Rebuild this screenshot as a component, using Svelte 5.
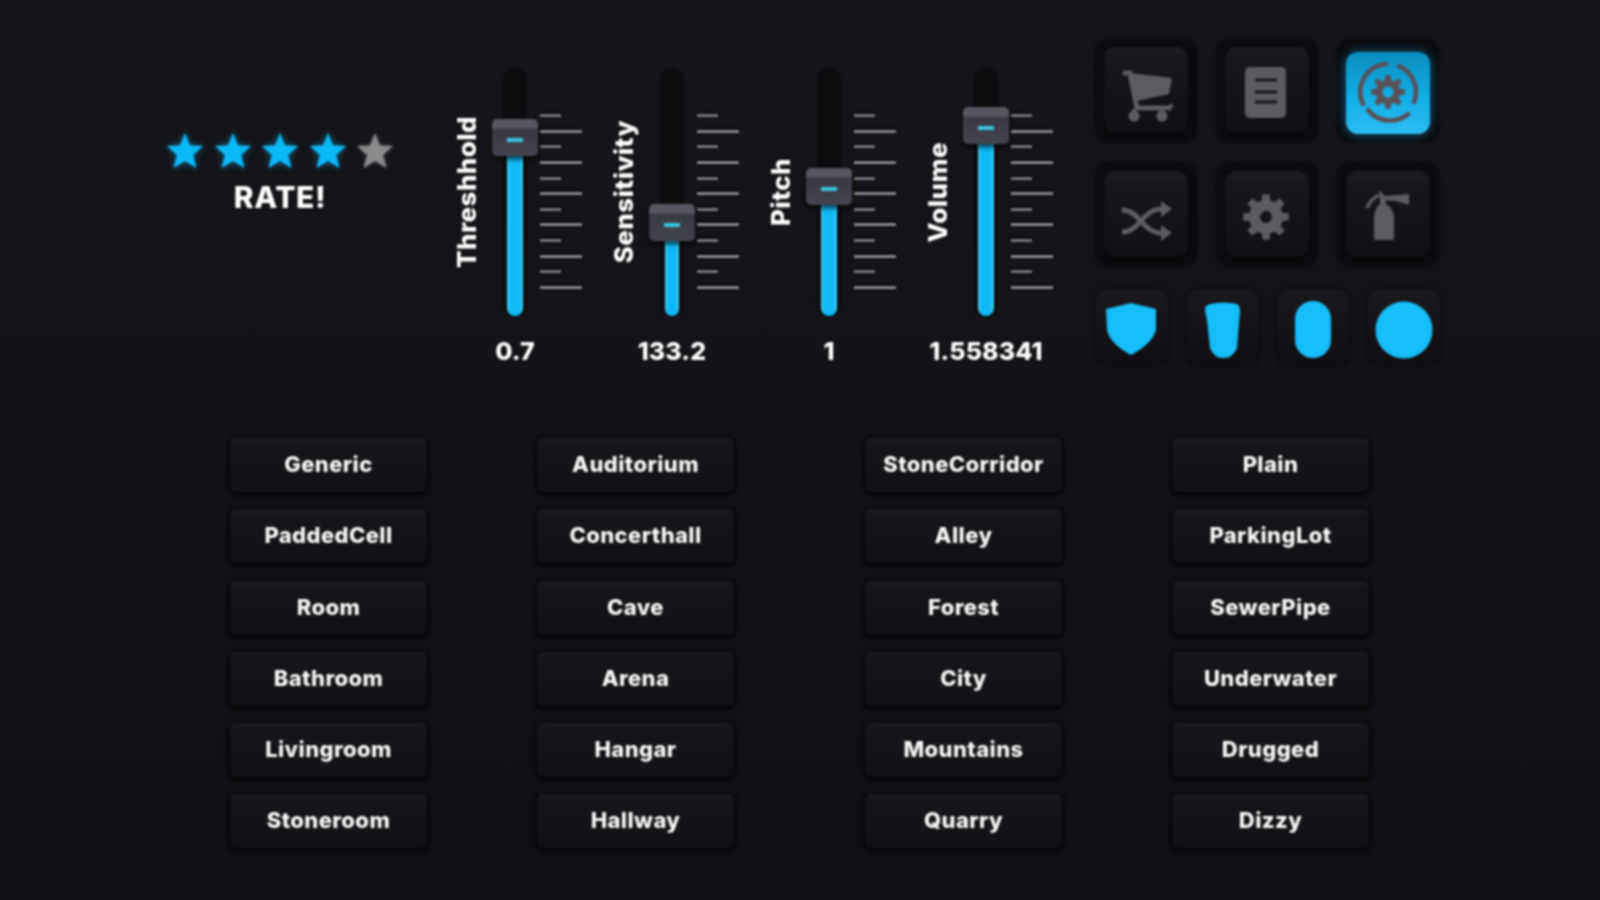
<script>
	const stars = [true, true, true, true, false];
	const sliders = [
		{ label: 'Threshhold', value: '0.7', top: 51, thick: 4 },
		{ label: 'Sensitivity', value: '133.2', top: 136, thick: 5 },
		{ label: 'Pitch', value: '1', top: 100, thick: 4 },
		{ label: 'Volume', value: '1.558341', top: 39, thick: 4 }
	];
	const ticks = Array.from({ length: 12 }, (_, i) => i % 2 === 1);
	const columns = [
		['Generic', 'PaddedCell', 'Room', 'Bathroom', 'Livingroom', 'Stoneroom'],
		['Auditorium', 'Concerthall', 'Cave', 'Arena', 'Hangar', 'Hallway'],
		['StoneCorridor', 'Alley', 'Forest', 'City', 'Mountains', 'Quarry'],
		['Plain', 'ParkingLot', 'SewerPipe', 'Underwater', 'Drugged', 'Dizzy']
	];

	function gearPath(cx, cy, outer, inner, hole) {
		let d = '';
		const teeth = 8;
		const step = (Math.PI * 2) / teeth;
		for (let i = 0; i < teeth; i++) {
			const a = i * step - Math.PI / 2;
			const pts = [
				[inner, a - step * 0.32],
				[outer, a - step * 0.2],
				[outer, a + step * 0.2],
				[inner, a + step * 0.32]
			];
			for (const [r, t] of pts) {
				d += `${d ? 'L' : 'M'}${(cx + r * Math.cos(t)).toFixed(2)} ${(cy + r * Math.sin(t)).toFixed(2)}`;
			}
		}
		d += `Z M${cx + hole} ${cy} A${hole} ${hole} 0 1 0 ${cx - hole} ${cy} A${hole} ${hole} 0 1 0 ${cx + hole} ${cy}Z`;
		return d;
	}
</script>

<div class="stage">
	<section class="top">
		<div class="rating">
			<div class="stars">
				{#each stars as on}
					<svg class="star" class:on viewBox="0 0 40 40" width="40" height="40">
						<polygon points="20,2 25,14.5 38,15 28,24 31.5,37 20,30 8.5,37 12,24 2,15 15,14.5" />
					</svg>
				{/each}
			</div>
			<div class="rate">RATE!</div>
		</div>

		<div class="sliders">
			{#each sliders as s}
				<div class="slider">
					<div class="label"><span>{s.label}</span></div>
					<div class="track">
						<div class="fill" style="top: {s.top + 20}px; left: {s.thick}px; right: {s.thick}px"></div>
						<div class="handle" style="top: {s.top}px"><i></i></div>
					</div>
					<div class="ticks">
						{#each ticks as long}
							<b class:long></b>
						{/each}
					</div>
					<div class="value">{s.value}</div>
				</div>
			{/each}
		</div>

		<div class="tools">
			<div class="icons">
				<div class="well">
					<div class="key">
						<svg viewBox="0 0 84 86">
							<path class="line" d="M19 26 H26 L33 61 H67" />
							<path d="M26 26 L68 31 L65 47 L33 54 Z" />
							<path class="line thin" d="M67 57 V61" />
							<path class="line thin" d="M30 62 V68 M58 62 V68" />
							<circle cx="30" cy="69" r="5.5" />
							<circle cx="58" cy="69" r="5.5" />
						</svg>
					</div>
				</div>
				<div class="well">
					<div class="key">
						<svg viewBox="0 0 84 86">
							<rect x="20" y="20" width="41" height="51" rx="5" />
							<path class="cut" d="M30 33 H52 M30 45 H52 M30 55 H52" />
						</svg>
					</div>
				</div>
				<div class="well">
					<div class="key active">
						<svg viewBox="0 0 84 82">
							<path class="ring" d="M40 12 A28 28 0 0 0 17 52" />
							<path class="ring" d="M53 14 A28 28 0 0 1 68 50" />
							<path class="ring" d="M22 58 A28 28 0 0 0 62 62" />
							<path fill-rule="evenodd" d={gearPath(42, 40, 17, 12.5, 5.5)} />
						</svg>
					</div>
				</div>
				<div class="well">
					<div class="key">
						<svg viewBox="0 0 84 86">
							<path class="line" d="M18 39 C36 39 38 62 58 62" />
							<path class="line" d="M18 61 C36 61 38 38 58 38" />
							<path d="M57 30 L68 38 L57 46 Z M57 54 L68 62 L57 70 Z" />
						</svg>
					</div>
				</div>
				<div class="well">
					<div class="key">
						<svg viewBox="0 0 84 86">
							<path fill-rule="evenodd" d={gearPath(41, 46, 23, 17, 6)} />
						</svg>
					</div>
				</div>
				<div class="well">
					<div class="key">
						<svg viewBox="0 0 84 86">
							<path d="M28 69 V47 Q28 38 34 33 V27 H40 V33 Q48 38 48 47 V69 Z" />
							<path d="M33 19 L39 25 L63 23 L63 34 L50 30 L34 29 Z" />
							<path class="line thin" d="M33 24 Q24 29 21 37" />
						</svg>
					</div>
				</div>
			</div>
			<div class="shapes">
				<div class="slot">
					<svg viewBox="0 0 72 75">
						<path d="M10 19 L35 13 L60 19 L60 40 Q56 54 35 65 Q14 54 11 40 Z" />
					</svg>
				</div>
				<div class="slot">
					<svg viewBox="0 0 72 75">
						<path d="M18 20 Q17 15 24 14 Q36 11 50 14 Q53 16 53 21 L50 58 Q46 68 36 68 Q27 68 23 58 L20 30 Z" />
					</svg>
				</div>
				<div class="slot">
					<svg viewBox="0 0 72 75">
						<rect x="18" y="11" width="36" height="57" rx="18" />
					</svg>
				</div>
				<div class="slot">
					<svg viewBox="0 0 72 75">
						<circle cx="36" cy="40" r="28.5" />
					</svg>
				</div>
			</div>
		</div>
	</section>

	<section class="presets">
		{#each columns as col}
			<div class="col">
				{#each col as name}
					<button>{name}</button>
				{/each}
			</div>
		{/each}
	</section>
</div>

<style>
	:global(body) {
		background: #121217;
	}

	.stage {
		width: 1600px;
		height: 900px;
		overflow: hidden;
		box-sizing: border-box;
		padding-top: 39px;
		background: linear-gradient(#15151a, #111115);
		color: #ffffff;
		font-family: Inter, "Liberation Sans", sans-serif;
		font-weight: 800;
		text-shadow: 0 0 2px #000;
	}

	.top {
		display: flex;
		align-items: flex-start;
		padding-left: 165px;
		filter: blur(0.9px);
	}

	.rating {
		width: 230px;
		margin-top: 92px;
		margin-right: 57px;
		text-align: center;
	}

	.stars {
		display: flex;
		gap: 7.5px;
	}

	.star {
		fill: #8b8b8d;
		filter: drop-shadow(0 0 2px rgba(140, 140, 140, 0.4));
	}

	.star.on {
		fill: #0cb9f8;
		filter: drop-shadow(0 0 3px rgba(12, 182, 244, 0.6));
	}

	.rate {
		margin-top: 9px;
		font-size: 30px;
		line-height: 34px;
		letter-spacing: 0.6px;
	}

	.sliders {
		display: flex;
		gap: 27px;
		margin-top: 29px;
		margin-right: 42px;
	}

	.slider {
		display: grid;
		grid-template-columns: 40px 46px 44px;
		width: 130px;
	}

	.label {
		display: flex;
		align-items: center;
		height: 249px;
		padding-bottom: 1px;
		box-sizing: border-box;
	}

	.label span {
		writing-mode: vertical-rl;
		transform: rotate(180deg);
		font-size: 26px;
		line-height: 30px;
		letter-spacing: 0.4px;
		white-space: nowrap;
	}

	.track {
		position: relative;
		width: 24px;
		height: 249px;
		margin: 0 auto;
		border-radius: 12px;
		background: linear-gradient(#0d0d10, #0f0f12);
	}

	.fill {
		position: absolute;
		bottom: 1px;
		border-radius: 0 0 8px 8px;
		background: linear-gradient(90deg, #45d0f2, #10b9f6 22%, #10b9f6 78%, #45d0f2);
		box-shadow: 0 0 2px #000;
	}

	.handle {
		position: absolute;
		left: -11px;
		width: 46px;
		height: 37px;
		display: flex;
		align-items: center;
		justify-content: center;
		border-radius: 5px;
		background: linear-gradient(#565761 0, #565761 22%, #383942 30%, #444550 100%);
		box-shadow: 0 3px 5px rgba(0, 0, 0, 0.7);
	}

	.handle i {
		width: 16px;
		height: 4px;
		margin-top: 4px;
		background: #3cc4e0;
	}

	.ticks {
		display: flex;
		flex-direction: column;
		justify-content: space-between;
		height: 175px;
		margin-top: 46px;
		margin-left: 2px;
	}

	.ticks b {
		width: 21px;
		height: 3px;
		background: #767678;
		box-shadow: 0 -1px 2px #000;
	}

	.ticks b.long {
		width: 42px;
		background: #88888a;
	}

	.value {
		grid-column: 2;
		justify-self: center;
		margin-top: 18px;
		font-size: 25px;
		line-height: 32px;
		letter-spacing: 0.1px;
		white-space: nowrap;
	}

	.tools {
		display: flex;
		flex-direction: column;
		width: 345px;
		gap: 24px;
	}

	.icons {
		display: grid;
		grid-template-columns: repeat(3, 102px);
		gap: 21px 19px;
	}

	.well {
		display: flex;
		align-items: center;
		justify-content: center;
		height: 103px;
		border-radius: 14px;
		background: #0d0c10;
		box-shadow: 0 0 3px #0b0b0e;
	}

	.key {
		width: 84px;
		height: 86px;
		margin-bottom: 2px;
		border-radius: 12px;
		background: linear-gradient(#1e1d22 0, #18171c 12%, #111014 100%);
		box-shadow: 0 4px 6px rgba(0, 0, 0, 0.55);
		fill: #5d5b61;
	}

	.key.active {
		height: 82px;
		margin: 5px 0 0;
		background: linear-gradient(#0a8ec0, #13aee6 55%, #2cbcf4);
		box-shadow: 0 0 12px rgba(10, 160, 215, 0.55);
		fill: #5a5058;
	}

	.key svg {
		display: block;
		width: 100%;
		height: 100%;
	}

	.line {
		fill: none;
		stroke: #5d5b61;
		stroke-width: 5;
	}

	.line.thin {
		stroke-width: 3.5;
	}

	.cut {
		fill: none;
		stroke: #17161a;
		stroke-width: 3;
	}

	.ring {
		fill: none;
		stroke: #5a5058;
		stroke-width: 4.5;
		stroke-linecap: round;
	}

	.shapes {
		display: flex;
		justify-content: space-between;
		padding-left: 1px;
	}

	.slot {
		width: 72px;
		height: 75px;
		border-radius: 10px;
		background: linear-gradient(#1a191e, #0f0e12);
		box-shadow: 0 0 4px #09090b;
		fill: #16bdf8;
	}

	.slot svg {
		display: block;
		width: 100%;
		height: 100%;
	}

	.presets {
		display: flex;
		gap: 110px;
		margin-top: 71px;
		padding-left: 230px;
		filter: blur(0.9px);
	}

	.col {
		display: flex;
		flex-direction: column;
		gap: 17.3px;
	}

	.col:nth-child(3) {
		margin-left: 21px;
	}

	button {
		width: 197px;
		height: 54px;
		padding: 0 0 2px;
		border: 0;
		border-radius: 6px;
		background: linear-gradient(#1c1b20 0, #161519 14%, #121115 100%);
		box-shadow: 0 3px 4px #060608, 0 0 4px 1px #09090b;
		color: #f8f8f8;
		font: inherit;
		font-size: 22px;
		letter-spacing: 0.4px;
		text-shadow: inherit;
	}
</style>
